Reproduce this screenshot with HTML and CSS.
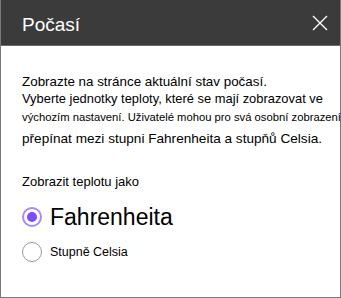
FILE: index.html
```html
<!DOCTYPE html>
<html lang="cs">
<head>
<meta charset="utf-8">
<link rel="stylesheet" href="styles.css">
</head>
<body>
<div class="panel">
  <div class="header">
    <span class="title">Počasí</span>
    <svg class="close" width="16" height="16" viewBox="0 0 16 16"><path d="M1 1L15 15M15 1L1 15" stroke="#fff" stroke-width="1.4" fill="none"/></svg>
  </div>
  <div class="body">
    <p class="desc">
      <span class="l1">Zobrazte na stránce aktuální stav počasí.</span>
      <span class="l2">Vyberte jednotky teploty, které se mají zobrazovat ve</span>
      <span class="l3">výchozím nastavení. Uživatelé mohou pro svá osobní zobrazení</span>
      <span class="l4">přepínat mezi stupni Fahrenheita a stupňů Celsia.</span>
    </p>
    <div class="label">Zobrazit teplotu jako</div>
    <div class="opt big"><span class="radio on"></span><span>Fahrenheita</span></div>
    <div class="opt small"><span class="radio"></span><span>Stupně Celsia</span></div>
  </div>
</div>
</body>
</html>
```
FILE: styles.css
```css
html, body { margin: 0; padding: 0; }
body { width: 341px; height: 298px; font-family: "Liberation Sans", Arial, sans-serif; color: #000; }
.panel { box-sizing: border-box; width: 341px; height: 298px; border: 1px solid #7a7a7a; border-top: 0; background: #fff; }
.header { height: 46px; background: #3b3b3b; display: flex; align-items: center; justify-content: space-between; padding: 4px 12px 0 21px; box-sizing: border-box; border-bottom: 1px solid #6a6a6a; }
.title { color: #fff; font-size: 19px; }
.close { display: block; margin-top: -4px; }
.body { padding: 28px 0 0 21px; }
.desc { margin: 0; }
.desc span { display: block; white-space: nowrap; }
.l1 { font-size: 13.4px; line-height: 16px; }
.l2 { font-size: 12.9px; line-height: 18px; }
.l3 { font-size: 11.25px; line-height: 18px; }
.l4 { font-size: 13.6px; line-height: 25px; }
.label { font-size: 13px; margin-top: 23px; }
.opt { display: flex; align-items: center; }
.big { font-size: 23px; margin-top: 12px; height: 32px; }
.small { font-size: 12.5px; margin-top: 6px; height: 26px; }
.radio { width: 20px; height: 20px; border: 1px solid #9a9a9a; border-radius: 50%; box-sizing: border-box; margin-right: 8px; position: relative; }
.radio.on { border: 2px solid #a78bfa; }
.radio.on::after { content: ""; position: absolute; left: 3px; top: 3px; width: 10px; height: 10px; border-radius: 50%; background: #7c4dff; }
```
